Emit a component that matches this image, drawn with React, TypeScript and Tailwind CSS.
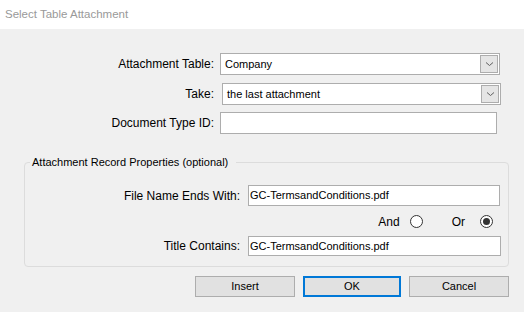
import React from "react";

const Chevron = () => (
  <svg width="9" height="6" viewBox="0 0 9 6" fill="none">
    <path d="M1 1.5 L4.5 4.5 L8 1.5" stroke="#606060" strokeWidth="1" />
  </svg>
);

const Combo = ({ value, width }: { value: string; width: string }) => (
  <div className={`${width} h-[22px] bg-white border border-[#adadad] flex items-center`}>
    <span className="flex-1 pl-[4px] leading-[14px] text-[11px]">{value}</span>
    <div className="w-[18px] h-[18px] mr-[1px] bg-[#e5e5e5] border border-[#adadad] flex items-center justify-center">
      <Chevron />
    </div>
  </div>
);

const Radio = ({ checked }: { checked?: boolean }) => (
  <div className="w-[13px] h-[13px] rounded-full border border-[#333] bg-white flex items-center justify-center">
    {checked && <div className="w-[7px] h-[7px] rounded-full bg-[#333]" />}
  </div>
);

export default function App() {
  return (
    <div className="w-[524px] h-[312px] bg-[#f0f0f0] flex flex-col font-['Liberation_Sans',Arial,sans-serif] text-[12px] text-black overflow-hidden">
      <div className="h-[29px] bg-white flex items-center pl-[5px] text-[11.5px] text-[#999]">
        Select Table Attachment
      </div>

      <div className="flex flex-col pt-[24px]">
        <div className="flex items-center">
          <div className="w-[214px] text-right">Attachment Table:</div>
          <div className="ml-[6px]">
            <Combo value="Company" width="w-[280px]" />
          </div>
        </div>
        <div className="flex items-center mt-[8px]">
          <div className="w-[214px] text-right">Take:</div>
          <div className="ml-[6px] pl-[2px]">
            <Combo value="the last attachment" width="w-[279px]" />
          </div>
        </div>
        <div className="flex items-center mt-[7px]">
          <div className="w-[214px] text-right">Document Type ID:</div>
          <div className="ml-[6px] w-[277px] h-[22px] bg-white border border-[#adadad]" />
        </div>
      </div>

      <fieldset className="ml-[24px] mt-[21px] w-[485px] border border-[#dcdcdc] rounded-[4px] pb-[10px]">
        <legend className="ml-[5px] px-[2px] pr-[8px] leading-[14px] text-[11px]">
          Attachment Record Properties (optional)
        </legend>
        <div className="flex items-center mt-[16px]">
          <div className="w-[215px] text-right">File Name Ends With:</div>
          <div className="ml-[8px] w-[252px] h-[21px] bg-white border border-[#adadad] flex items-center pl-[1px] text-[11px]">
            GC-TermsandConditions.pdf
          </div>
        </div>
        <div className="flex items-center justify-end mt-[9px] pr-[15px] h-[13px]">
          <span>And</span>
          <div className="ml-[10px]">
            <Radio />
          </div>
          <span className="ml-[29px]">Or</span>
          <div className="ml-[15px]">
            <Radio checked />
          </div>
        </div>
        <div className="flex items-center mt-[8px]">
          <div className="w-[215px] text-right">Title Contains:</div>
          <div className="ml-[8px] w-[253px] h-[20px] bg-white border border-[#adadad] flex items-center pl-[1px] text-[11px]">
            GC-TermsandConditions.pdf
          </div>
        </div>
      </fieldset>

      <div className="flex mt-[9px] ml-[195px] gap-[8px] text-[11px]">
        <div className="w-[100px] h-[21px] bg-[#e1e1e1] border border-[#adadad] flex items-center justify-center">
          Insert
        </div>
        <div className="w-[98px] h-[21px] bg-[#e1e1e1] border-2 border-[#0078d7] flex items-center justify-center">
          OK
        </div>
        <div className="w-[100px] h-[21px] bg-[#e1e1e1] border border-[#adadad] flex items-center justify-center">
          Cancel
        </div>
      </div>
    </div>
  );
}
